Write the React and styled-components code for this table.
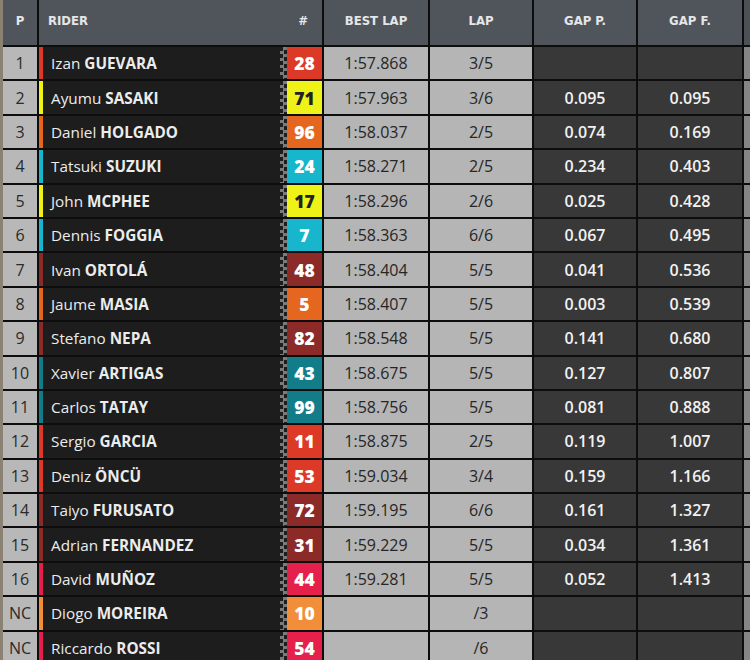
import React from "react";
import styled, { createGlobalStyle } from "styled-components";

const GlobalStyle = createGlobalStyle`
  html, body {
    margin: 0;
    padding: 0;
    overflow: hidden;
    background: #111;
  }
  * {
    box-sizing: border-box;
  }
`;

const COLORS = {
  red: "#dc3a26",
  yellow: "#eef216",
  orange: "#e5661f",
  cyan: "#17b6cc",
  darkred: "#8c2a27",
  teal: "#127d89",
  pink: "#e5214b",
  amber: "#f28d3a",
};

const riders = [
  ["1", "Izan", "GUEVARA", "28", "red", "1:57.868", "3/5", "", ""],
  ["2", "Ayumu", "SASAKI", "71", "yellow", "1:57.963", "3/6", "0.095", "0.095"],
  ["3", "Daniel", "HOLGADO", "96", "orange", "1:58.037", "2/5", "0.074", "0.169"],
  ["4", "Tatsuki", "SUZUKI", "24", "cyan", "1:58.271", "2/5", "0.234", "0.403"],
  ["5", "John", "MCPHEE", "17", "yellow", "1:58.296", "2/6", "0.025", "0.428"],
  ["6", "Dennis", "FOGGIA", "7", "cyan", "1:58.363", "6/6", "0.067", "0.495"],
  ["7", "Ivan", "ORTOLÁ", "48", "darkred", "1:58.404", "5/5", "0.041", "0.536"],
  ["8", "Jaume", "MASIA", "5", "orange", "1:58.407", "5/5", "0.003", "0.539"],
  ["9", "Stefano", "NEPA", "82", "darkred", "1:58.548", "5/5", "0.141", "0.680"],
  ["10", "Xavier", "ARTIGAS", "43", "teal", "1:58.675", "5/5", "0.127", "0.807"],
  ["11", "Carlos", "TATAY", "99", "teal", "1:58.756", "5/5", "0.081", "0.888"],
  ["12", "Sergio", "GARCIA", "11", "red", "1:58.875", "2/5", "0.119", "1.007"],
  ["13", "Deniz", "ÖNCÜ", "53", "red", "1:59.034", "3/4", "0.159", "1.166"],
  ["14", "Taiyo", "FURUSATO", "72", "darkred", "1:59.195", "6/6", "0.161", "1.327"],
  ["15", "Adrian", "FERNANDEZ", "31", "darkred", "1:59.229", "5/5", "0.034", "1.361"],
  ["16", "David", "MUÑOZ", "44", "pink", "1:59.281", "5/5", "0.052", "1.413"],
  ["NC", "Diogo", "MOREIRA", "10", "amber", "", "/3", "", ""],
  ["NC", "Riccardo", "ROSSI", "54", "pink", "", "/6", "", ""],
];

const Page = styled.div`
  display: flex;
  background: #8a8173;
  padding-left: 3px;
  width: 760px;
  height: 660px;
`;

const Table = styled.div`
  display: grid;
  grid-template-columns: 34px 283px 104px 102px 102px 104px 20px;
  grid-template-rows: 45px;
  grid-auto-rows: 32.4px;
  gap: 2px;
  background: #0d0d0d;
  font-family: "Open Sans", "Liberation Sans", sans-serif;
`;

const HeadCell = styled.div`
  background: #50555c;
  color: #e4e6e8;
  font-family: "DejaVu Sans Condensed", "DejaVu Sans", sans-serif;
  font-weight: bold;
  font-size: 13px;
  display: flex;
  align-items: center;
  justify-content: ${(p) => (p.$left ? "flex-start" : "center")};
  padding-bottom: 5px;
  padding-left: ${(p) => (p.$left ? "9px" : "0")};
`;

const RiderHead = styled(HeadCell)`
  justify-content: space-between;
  padding-right: 14px;
`;

const PosCell = styled.div`
  background: #b8b8b8;
  color: #2a2a2a;
  font-size: 16px;
  display: flex;
  align-items: center;
  justify-content: center;
`;

const RiderCell = styled.div`
  display: flex;
  align-items: stretch;
  background: #1d1d1d;
`;

const Stripe = styled.div`
  width: 4px;
  background: ${(p) => p.$color};
`;

const Name = styled.div`
  flex: 1;
  display: flex;
  align-items: center;
  gap: 4px;
  padding-left: 8px;
  color: #ececec;
  font-size: 15.3px;
  white-space: nowrap;

  b {
    font-weight: 700;
  }
`;

const Checker = styled.div`
  width: 7px;
  background: repeating-conic-gradient(#7b7b7b 0 25%, #1d1d1d 0 50%) 0 0 / 7px 7px;
`;

const Number = styled.div`
  width: 35px;
  background: ${(p) => p.$color};
  color: ${(p) => (p.$dark ? "#222" : "#fff")};
  font-weight: 800;
  font-size: 17.5px;
  display: flex;
  align-items: center;
  justify-content: center;
`;

const TimeCell = styled.div`
  background: #b5b5b5;
  color: #262626;
  font-size: 16px;
  display: flex;
  align-items: center;
  justify-content: center;
`;

const GapCell = styled.div`
  background: #383838;
  color: #f2f2f2;
  font-weight: 600;
  font-size: 16px;
  display: flex;
  align-items: center;
  justify-content: center;
`;

const EdgeCell = styled.div`
  background: ${(p) => (p.$head ? "#4c5158" : "#858585")};
`;

export default function App() {
  return (
    <>
      <GlobalStyle />
      <Page>
        <Table>
          <HeadCell>P</HeadCell>
          <RiderHead $left>
            <span>RIDER</span>
            <span>#</span>
          </RiderHead>
          <HeadCell>BEST LAP</HeadCell>
          <HeadCell>LAP</HeadCell>
          <HeadCell>GAP P.</HeadCell>
          <HeadCell>GAP F.</HeadCell>
          <EdgeCell $head />
          {riders.map(([pos, first, last, num, col, best, lap, gp, gf], i) => (
            <React.Fragment key={i}>
              <PosCell>{pos}</PosCell>
              <RiderCell>
                <Stripe $color={COLORS[col]} />
                <Name>
                  <span>{first}</span>
                  <b>{last}</b>
                </Name>
                <Checker />
                <Number $color={COLORS[col]} $dark={col === "yellow"}>
                  {num}
                </Number>
              </RiderCell>
              <TimeCell>{best}</TimeCell>
              <TimeCell>{lap}</TimeCell>
              <GapCell>{gp}</GapCell>
              <GapCell>{gf}</GapCell>
              <EdgeCell />
            </React.Fragment>
          ))}
        </Table>
      </Page>
    </>
  );
}
